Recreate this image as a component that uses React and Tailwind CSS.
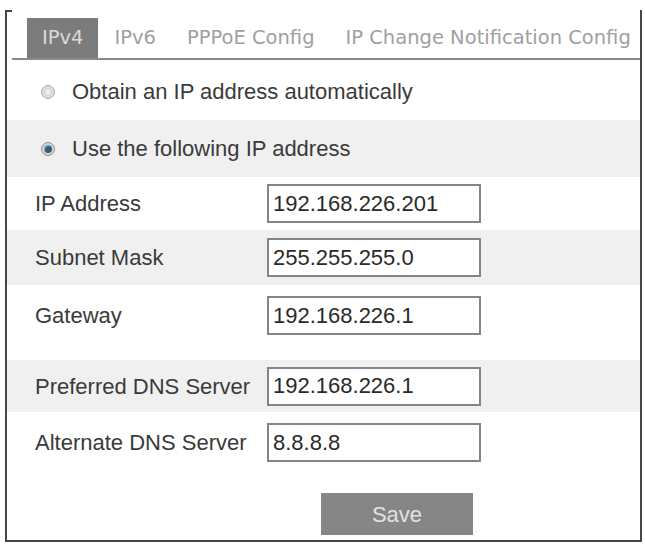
import { useState } from 'react';

const tabs = ['IPv4', 'IPv6', 'PPPoE Config', 'IP Change Notification Config'];

const fields = [
  { label: 'IP Address', value: '192.168.226.201', row: 'h-[53px] bg-white items-center' },
  { label: 'Subnet Mask', value: '255.255.255.0', row: 'h-[55px] bg-[#f0f0f0] items-center' },
  { label: 'Gateway', value: '192.168.226.1', row: 'h-[75px] bg-white items-start pt-[11px]' },
  { label: 'Preferred DNS Server', value: '192.168.226.1', row: 'h-[52px] bg-[#f0f0f0] items-center' },
  { label: 'Alternate DNS Server', value: '8.8.8.8', row: 'h-[81px] bg-white items-start pt-[11px]' },
];

const Radio = ({ checked }) => (
  <span
    className={`flex items-center justify-center w-[14px] h-[14px] rounded-full border mr-[17px] shrink-0 ${
      checked ? 'border-[#8f8f8f] bg-[#d6d6d6]' : 'border-[#acacac] bg-[#dedede]'
    }`}
  >
    {checked ? (
      <span className="w-[8px] h-[8px] rounded-full bg-[#2f5e7c] shadow-[inset_1px_1px_1px_rgba(255,255,255,0.5)]" />
    ) : (
      <span className="w-[8px] h-[8px] rounded-full bg-[#eeeeee] border border-[#cfcfcf]" />
    )}
  </span>
);

export default function App() {
  const [active, setActive] = useState('IPv4');
  const [mode, setMode] = useState('manual');

  return (
    <div className="w-[645px] h-[545px] bg-white pt-[10px] pl-[5px] pr-[3px] pb-[3px] font-['Liberation_Sans',Arial,sans-serif]">
      <div className="h-full flex flex-col border-l-2 border-r-2 border-b-2 border-[#464646]">
        {/* corner tick */}
        <div className="w-[5px] h-[2px] bg-[#464646]" />

        {/* Tabs */}
        <div className="mt-[6px] ml-[5px] pl-[15px] flex gap-[1px] border-b-2 border-[#8a8a8a] font-['DejaVu_Sans',sans-serif] text-[19.5px]">
          {tabs.map(tab => (
            <button
              key={tab}
              onClick={() => setActive(tab)}
              className={`h-[40px] px-[15px] whitespace-nowrap leading-none ${
                active === tab ? 'bg-[#7c7c7c] text-[#d9d9d9]' : 'text-[#a0a0a0]'
              }`}
            >
              {tab}
            </button>
          ))}
        </div>

        {/* Mode radios */}
        <label
          className="h-[60px] pt-[3px] flex items-center pl-[34px] text-[22px] text-[#3a3a3a] cursor-pointer"
          onClick={() => setMode('auto')}
        >
          <Radio checked={mode === 'auto'} />
          Obtain an IP address automatically
        </label>
        <label
          className="h-[57px] flex items-center pl-[34px] bg-[#f0f0f0] text-[22px] text-[#3a3a3a] cursor-pointer"
          onClick={() => setMode('manual')}
        >
          <Radio checked={mode === 'manual'} />
          Use the following IP address
        </label>

        {/* Address fields */}
        {fields.map(f => (
          <div key={f.label} className={`flex pl-[28px] ${f.row}`}>
            <span className="w-[232px] text-[22px] text-[#3a3a3a] leading-[39px] whitespace-nowrap">{f.label}</span>
            <input
              defaultValue={f.value}
              className="w-[214px] h-[39px] border-2 border-[#858585] bg-white pl-[4px] text-[22px] text-[#2a2a2a] outline-none"
            />
          </div>
        ))}

        {/* Save */}
        <div className="pl-[314px]">
          <button className="w-[152px] h-[42px] bg-[#868686] text-[22px] text-[#e2e2e2]">Save</button>
        </div>
      </div>
    </div>
  );
}
